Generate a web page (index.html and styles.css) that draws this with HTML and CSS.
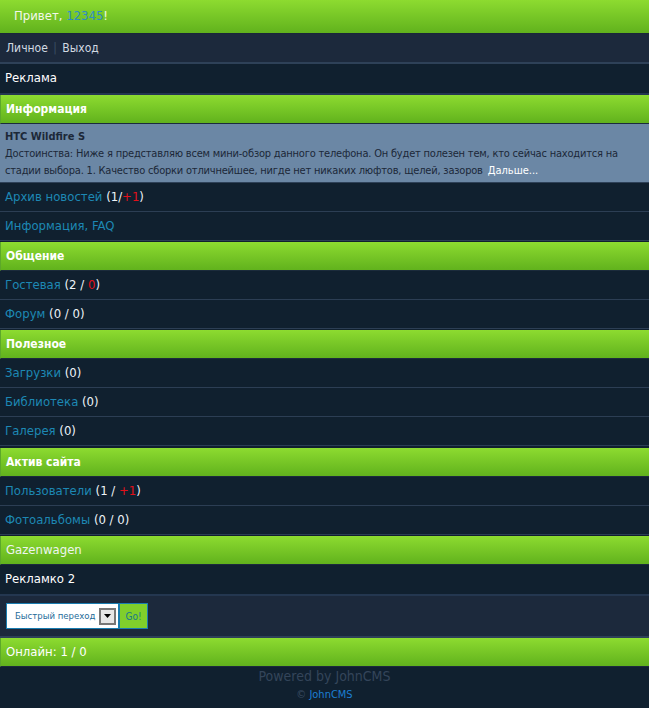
FILE: index.html
```
<!DOCTYPE html>
<html lang="ru">
<head>
    <meta charset="UTF-8">
    <meta name="viewport" content="width=device-width, initial-scale=1.0">
    <title>JohnCMS</title>
    <link rel="stylesheet" href="styles.css">
</head>
<body>
    <div class="header">Привет, <span class="nick">12345</span>!</div>
    <div class="tmn"><a href="#">Личное</a> <span class="sep">|</span> <a href="#">Выход</a></div>
    <div class="ads">Реклама</div>

    <div class="phdr"><b>Информация</b></div>
    <div class="news">
        <div class="news-title">HTC Wildfire S</div>
        Достоинства: Ниже я представляю всем мини-обзор данного телефона. Он будет полезен тем, кто сейчас находится на стадии выбора. 1. Качество сборки отличнейшее, нигде нет никаких люфтов, щелей, зазоров <a href="#" class="more">Дальше...</a>
    </div>
    <div class="group">
        <div class="menu"><a href="#">Архив новостей</a> <span class="cnt">(1/<span class="red">+1</span>)</span></div>
        <div class="menu"><a href="#">Информация, FAQ</a></div>
    </div>

    <div class="phdr"><b>Общение</b></div>
    <div class="group">
        <div class="menu"><a href="#">Гостевая</a> <span class="cnt">(2&nbsp;/&nbsp;<span class="red">0</span>)</span></div>
        <div class="menu"><a href="#">Форум</a> <span class="cnt">(0&nbsp;/&nbsp;0)</span></div>
    </div>

    <div class="phdr"><b>Полезное</b></div>
    <div class="group wide">
        <div class="menu"><a href="#">Загрузки</a> <span class="cnt">(0)</span></div>
        <div class="menu"><a href="#">Библиотека</a> <span class="cnt">(0)</span></div>
        <div class="menu"><a href="#">Галерея</a> <span class="cnt">(0)</span></div>
    </div>

    <div class="phdr"><b>Актив сайта</b></div>
    <div class="group">
        <div class="menu"><a href="#">Пользователи</a> <span class="cnt">(1&nbsp;/&nbsp;<span class="red">+1</span>)</span></div>
        <div class="menu"><a href="#">Фотоальбомы</a> <span class="cnt">(0&nbsp;/&nbsp;0)</span></div>
    </div>

    <div class="phdr plain">Gazenwagen</div>
    <div class="ads">Рекламко 2</div>

    <div class="tmn form-row">
        <form class="jump">
            <div class="fake-select">
                <span>Быстрый переход</span>
                <span class="arrow"><svg width="7" height="4" viewBox="0 0 7 4"><path d="M0 0h7L3.5 4z" fill="#000"/></svg></span>
            </div>
            <button type="button" class="go">Go!</button>
        </form>
    </div>

    <div class="phdr">Онлайн: 1&nbsp;/&nbsp;0</div>

    <div class="footer">
        <div class="powered">Powered by JohnCMS</div>
        <div class="copy">&copy; <a href="#">JohnCMS</a></div>
    </div>
</body>
</html>
```

FILE: styles.css
```
body {
    margin: 0;
    padding: 0;
    background: #10202f;
    font-family: "DejaVu Sans Condensed", "DejaVu Sans", sans-serif;
    font-stretch: condensed;
    font-size: 13px;
    color: #fff;
}

a {
    text-decoration: none;
}

.header {
    height: 33px;
    line-height: 32px;
    padding-left: 14px;
    background: linear-gradient(to bottom, #8ddb30, #61b21d);
    border-bottom: 1px solid #1a2738;
    color: #f2f8ea;
}

.header .nick {
    color: #2e8cc2;
}

.tmn {
    background: #1c293c;
    border-bottom: 2px solid #2e4158;
    padding: 5px 6px;
    line-height: 18px;
    font-size: 12px;
    color: #d2dae2;
}

.tmn a {
    color: #d2dae2;
}

.tmn .sep {
    color: #3a4e66;
    margin: 0 2px;
}

.ads {
    padding: 5px 5px 6px;
    line-height: 18px;
    background: #10202f;
    border-bottom: 2px solid #243750;
    color: #fff;
}

.phdr {
    padding: 5px 5px;
    line-height: 18px;
    background: linear-gradient(to bottom, #8ddb30, #61b21d);
    border-left: 1px solid #5ca82a;
    border-bottom: 1px solid #1b2b3c;
    color: #fff;
}

.phdr b {
    font-weight: bold;
    font-size: 12px;
}

.phdr.plain {
    color: #eef5f0;
}

.news {
    background: #6b87a5;
    border-bottom: 1px solid #2e4158;
    padding: 4px 5px 3px;
    font-size: 11px;
    line-height: 17px;
    letter-spacing: -0.2px;
    color: #1c2838;
}

.news-title {
    font-weight: bold;
    letter-spacing: 0;
}

.news .more {
    color: #fff;
    letter-spacing: 0;
    margin-left: 2px;
}

.group {
    padding-bottom: 1px;
}

.group.wide {
    padding-bottom: 2px;
}

.menu {
    padding: 5px 5px;
    line-height: 18px;
    border-bottom: 1px solid #2c3e54;
}

.menu a {
    color: #1d88b4;
}

.cnt {
    color: #eef3f8;
}

.red {
    color: #e3101a;
}

.form-row {
    padding: 7px 6px 7px;
}

.jump {
    display: flex;
    margin: 0;
}

.fake-select {
    display: flex;
    align-items: center;
    gap: 4px;
    height: 24px;
    padding: 0 2px 0 8px;
    background: #fff;
    border: 1px solid #1a7db0;
    color: #1d6b98;
    font-size: 9.5px;
}

.fake-select .arrow {
    width: 17px;
    height: 17px;
    border: 2px solid #777;
    background: #e6e6e6;
    display: flex;
    align-items: center;
    justify-content: center;
    box-sizing: border-box;
}

.go {
    height: 26px;
    padding: 0 5px;
    background: #80cf2b;
    border: 1px solid #1a7db0;
    color: #1b7a8a;
    font-family: inherit;
    font-size: 10px;
}

.footer {
    text-align: center;
}

.powered {
    color: #34455a;
    font-size: 14px;
    line-height: 19px;
}

.copy {
    color: #3a4c62;
    font-size: 11px;
    line-height: 18px;
}

.copy a {
    color: #1c7fd2;
}
```
